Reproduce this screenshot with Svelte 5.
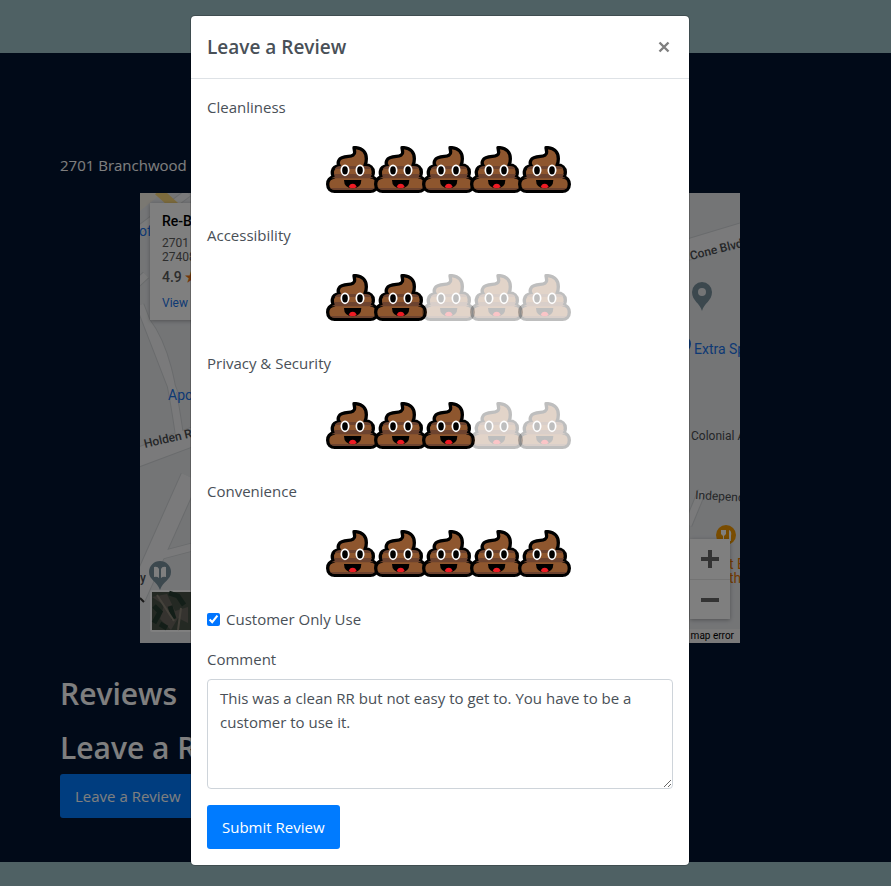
<script>
  let ratings = $state([
    { name: 'Cleanliness', value: 5 },
    { name: 'Accessibility', value: 2 },
    { name: 'Privacy & Security', value: 3 },
    { name: 'Convenience', value: 5 }
  ]);
  let customerOnly = $state(true);
  let comment = $state(
    'This was a clean RR but not easy to get to. You have to be a customer to use it.'
  );
  const scores = [1, 2, 3, 4, 5];
</script>

{#snippet poop()}
  <svg class="poop" viewBox="0 0 159 141" aria-hidden="true">
    <path
      class="shape"
      d="M84 5H90C110 7 121 20 121 38C121 46 120 52 117 57C133 57 142 66 142 78C142 85 140 90 136 93C147 94 154 103 154 115C154 128 145 136 133 136H26C14 136 5 128 5 115C5 103 12 95 24 93C20 89 18 84 19 76C21 66 29 60 40 60C36 55 36 47 39 42C44 33 55 32 67 31C79 30 87 26 86 18Z"
    />
    <path class="shade" d="M43 60H119C129 60 134 63 136 69H26C30 63 35 60 43 60Z" />
    <path class="shade" d="M24 84H138L134 92Q140 94 143 97H16Q20 94 26 92Z" />
    <path class="shade" d="M12 126H147Q141 132 133 132H26Q18 132 12 126Z" />
    <ellipse class="eye" cx="57" cy="73" rx="11" ry="15" />
    <ellipse class="eye" cx="102" cy="73" rx="11" ry="15" />
    <path d="M54 102H106Q106 126 80 127Q54 126 54 102Z" />
    <path class="tongue" d="M68 123Q71 113 80 113Q89 113 92 123Q87 127 80 127Q73 127 68 123Z" />
  </svg>
{/snippet}

<div class="page">
  <main>
    <p class="address">2701 Branchwood Dr, Greensboro, NC 27408</p>
    <div class="map">
      <svg class="tiles" viewBox="0 0 600 450" aria-hidden="true">
        <rect width="600" height="450" fill="#e8eaed" />
        <path d="M0 0H22L0 18Z" fill="#f5f0e4" />
        <g fill="none" stroke="#d3d6d9" stroke-width="9">
          <path d="M0 36L48 0M-5 92L6 82M0 112L34 200M6 128C26 154 32 190 40 246M22 362L60 352" />
          <path d="M-4 265L60 241" stroke-width="20" />
          <path d="M-4 405L50 284" stroke-width="20" />
          <path d="M540 59L610 38" stroke-width="22" />
          <path d="M548 332L562 298" />
        </g>
        <g fill="none" stroke="#f4f5f6" stroke-width="7">
          <path d="M0 36L48 0M-5 92L6 82M0 112L34 200M6 128C26 154 32 190 40 246M22 362L60 352" />
          <path d="M-4 265L60 241" stroke-width="18" />
          <path d="M-4 405L50 284" stroke-width="18" />
          <path d="M540 59L610 38" stroke-width="20" />
          <path d="M548 332L562 298" />
        </g>
        <path d="M18 -2L37 15" stroke="#f9d77b" stroke-width="9" />
        <g class="place">
          <text x="-1" y="43">of</text>
          <text x="28" y="207">Apollo</text>
          <text x="554" y="161">Extra Space</text>
        </g>
        <g class="street">
          <text x="5" y="255" transform="rotate(-13 5 255)">Holden Rd</text>
          <text x="551" y="67" transform="rotate(-14 551 67)">Cone Blvd</text>
          <text x="551" y="247" class="small">Colonial Ave</text>
          <text x="555" y="306" class="small" transform="rotate(3 555 306)">Independence</text>
          <text x="0" y="389">y</text>
        </g>
        <circle cx="542" cy="151" r="9" fill="#1a73e8" />
        <path d="M0 405L4 409" stroke="#333" stroke-width="2" />
        <path d="M20 397C17 388 9 387 9 379A11 11 0 0 1 31 379C31 387 23 388 20 397Z" fill="#78909c" />
        <path d="M14 374Q18 373 19 376V385Q17 383 14 384ZM26 374Q22 373 21 376V385Q23 383 26 384Z" fill="#fff" />
        <path d="M562 118C560 110 552 108 552 99A10 10 0 0 1 572 99C572 108 564 110 562 118Z" fill="#78909c" />
        <circle cx="562" cy="99" r="4" fill="#e8eaed" />
        <circle cx="586" cy="342" r="10" fill="#f29900" />
        <path d="M581 337H586V341L584 343V348H583V343L581 341ZM589 337Q592 338 591 343V348H589Z" fill="#fff" />
        <g fill="#e37400" font-size="14"><text x="589" y="376">t E</text><text x="589" y="390">th</text></g>
        <rect x="10" y="397" width="60" height="42" rx="2" fill="#fff" />
        <rect x="12" y="399" width="56" height="38" fill="#485347" />
        <path d="M12 404L24 412L20 426L31 437L38 425L48 430V414L35 418L27 401Z" fill="#6a665e" />
        <path d="M14 413L20 419L14 430M29 400L38 403L44 412M30 413L34 426M20 431L27 435" stroke="#273d30" stroke-width="5" fill="none" />
        <path d="M17 402L34 428M41 415L38 437" stroke="#8b8477" stroke-width="2" />
      </svg>
      <div class="card">
        <strong>Re-Boot Cafe</strong>
        <span>2701 Branchwood Dr</span>
        <span>27408</span>
        <span class="score">4.9 <b>★</b></span>
        <a href="#larger">View larger map</a>
      </div>
      <div class="zoom">
        <button type="button" aria-label="Zoom in">
          <svg viewBox="0 0 18 18"><path d="M0 9H18M9 0V18" /></svg>
        </button>
        <button type="button" aria-label="Zoom out">
          <svg viewBox="0 0 18 18"><path d="M0 9H18" /></svg>
        </button>
      </div>
      <a class="report" href="#report">map error</a>
    </div>
    <h2>Reviews</h2>
    <h2>Leave a Review</h2>
    <button type="button" class="primary">Leave a Review</button>
  </main>
</div>

<div class="backdrop">
  <div class="modal" role="dialog" aria-modal="true" aria-labelledby="title">
    <header>
      <h5 id="title">Leave a Review</h5>
      <button type="button" class="close" aria-label="Close">
        <svg viewBox="0 0 12 12"><path d="M1.5 1.5L10.5 10.5M10.5 1.5L1.5 10.5" /></svg>
      </button>
    </header>
    <form onsubmit={(e) => e.preventDefault()}>
      {#each ratings as rating, i}
        <fieldset>
          <legend>{rating.name}</legend>
          <div class="scores">
            {#each scores as n}
              <label class:off={n > rating.value}>
                <input type="radio" name="rating-{i}" value={n} aria-label="{n} of 5" bind:group={rating.value} />
                {@render poop()}
              </label>
            {/each}
          </div>
        </fieldset>
      {/each}
      <label class="check">
        <input type="checkbox" bind:checked={customerOnly} />
        Customer Only Use
      </label>
      <label class="caption" for="comment">Comment</label>
      <textarea id="comment" bind:value={comment}></textarea>
      <button type="submit" class="primary">Submit Review</button>
    </form>
  </div>
</div>

<style>
  :global(body) {
    margin: 0;
    background: #9ec2c8;
  }
  .page,
  .backdrop {
    font-family: 'Open Sans', 'Noto Sans', sans-serif;
    font-size: 15px;
    line-height: 24px;
    box-sizing: border-box;
  }
  .page {
    padding: 53px 0 24px;
  }
  main {
    box-sizing: border-box;
    padding: 100px 71px 44px 60px;
    background: #031430;
    color: #fff;
  }
  .address {
    margin: 0 0 16px;
  }
  .map {
    position: relative;
    max-width: 600px;
    height: 450px;
    margin: 0 auto 32px;
    overflow: hidden;
    font-family: Roboto, sans-serif;
  }
  .tiles {
    display: block;
    width: 600px;
    height: 450px;
  }
  .tiles text {
    font-family: Roboto, sans-serif;
  }
  .place {
    fill: #1a73e8;
    font-size: 14px;
  }
  .street {
    fill: #4a4d51;
    font-size: 12px;
    font-weight: 500;
  }
  .street .small {
    font-weight: 400;
  }
  .card {
    position: absolute;
    top: 10px;
    left: 10px;
    box-sizing: border-box;
    width: 240px;
    height: 117px;
    padding: 9px 12px;
    display: flex;
    flex-direction: column;
    background: #fff;
    box-shadow: 0 1px 4px rgba(0, 0, 0, 0.3);
    color: #5b5b5b;
    font-size: 12px;
    line-height: 14px;
  }
  .card strong {
    margin-bottom: 6px;
    color: #000;
    font-size: 14px;
    font-weight: 500;
    line-height: 18px;
  }
  .card .score {
    margin: 4px 0 10px;
    font-size: 14px;
    font-weight: 500;
    line-height: 18px;
  }
  .card b {
    color: #e7711b;
  }
  .card a {
    color: #1a73e8;
    text-decoration: none;
  }
  .zoom {
    position: absolute;
    right: 10px;
    bottom: 24px;
    width: 40px;
    background: #fff;
    box-shadow: 0 1px 4px rgba(0, 0, 0, 0.3);
  }
  .zoom button {
    display: flex;
    align-items: center;
    justify-content: center;
    width: 100%;
    height: 40px;
    padding: 0;
    border: 0;
    background: none;
  }
  .zoom button + button {
    border-top: 1px solid #e6e6e6;
  }
  .zoom svg {
    width: 18px;
    height: 18px;
    stroke: #666;
    stroke-width: 4;
  }
  .report {
    position: absolute;
    right: 0;
    bottom: 0;
    padding: 0 6px 0 4px;
    background: #f5f5f5;
    color: #000;
    font-size: 10px;
    line-height: 14px;
    text-decoration: none;
  }
  h2 {
    margin: 0 0 16px;
    font-size: 30px;
    font-weight: 600;
    line-height: 38px;
  }
  h2 + h2 {
    margin-bottom: 7px;
  }
  .primary {
    display: block;
    height: 44px;
    padding: 0 15px;
    border: 0;
    border-radius: 3px;
    background: #007bff;
    color: #fff;
    font: inherit;
  }
  .backdrop {
    position: absolute;
    inset: 0;
    min-height: 886px;
    padding: 15px 11px 20px 0;
    background: rgba(0, 0, 0, 0.5);
  }
  .modal {
    box-sizing: border-box;
    max-width: 500px;
    margin: 0 auto;
    border: 1px solid rgba(0, 0, 0, 0.2);
    border-radius: 5px;
    background: #fff;
    background-clip: padding-box;
    color: #495057;
  }
  header {
    display: flex;
    align-items: center;
    justify-content: space-between;
    padding: 16px;
    border-bottom: 1px solid #dee2e6;
  }
  h5 {
    margin: 0;
    color: #495057;
    font-size: 19px;
    font-weight: 600;
    line-height: 30px;
  }
  .close {
    display: flex;
    align-items: center;
    justify-content: center;
    width: 18px;
    height: 30px;
    padding: 0;
    border: 0;
    background: none;
  }
  .close svg {
    width: 12px;
    height: 12px;
    stroke: #7f7f7f;
    stroke-width: 2.4;
  }
  form {
    padding: 16px;
  }
  fieldset {
    min-width: 0;
    margin: 0 0 16px;
    padding: 0;
    border: 0;
  }
  legend {
    padding: 0 0 8px;
  }
  .scores {
    display: flex;
    align-items: center;
    justify-content: center;
    height: 80px;
    padding-left: 16px;
  }
  .scores label {
    display: flex;
    justify-content: center;
    position: relative;
    width: 48px;
  }
  .scores input {
    position: absolute;
    opacity: 0;
  }
  .off {
    opacity: 0.25;
  }
  .poop {
    flex: none;
    width: 53px;
    height: 47px;
    margin-top: 4px;
  }
  .shape {
    fill: #8e562e;
    stroke: #000;
    stroke-width: 10;
    stroke-linejoin: round;
  }
  .shade {
    fill: #6d432f;
  }
  .eye {
    stroke: #fff;
    stroke-width: 5;
  }
  .tongue {
    fill: #ed1c24;
  }
  .check {
    display: flex;
    align-items: center;
    gap: 6px;
    margin-bottom: 16px;
  }
  .check input {
    width: 13px;
    height: 13px;
    margin: 0;
    accent-color: #0075ff;
  }
  .caption {
    display: block;
    margin-bottom: 8px;
  }
  textarea {
    display: block;
    box-sizing: border-box;
    width: 100%;
    height: 110px;
    margin: 0 0 16px;
    padding: 6px 12px;
    border: 1px solid #ced4da;
    border-radius: 4px;
    background: #fff;
    color: #495057;
    font: inherit;
    resize: vertical;
  }
</style>
